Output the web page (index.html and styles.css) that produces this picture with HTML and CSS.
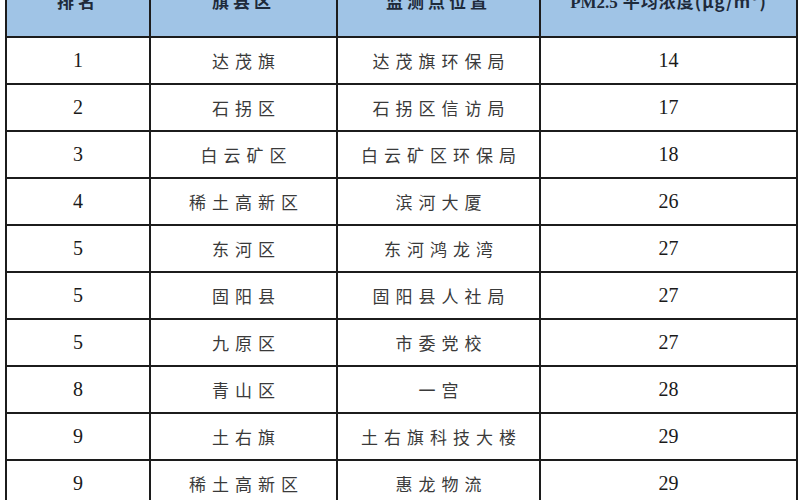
FILE: index.html
```html
<!DOCTYPE html>
<html lang="zh">
<head>
<meta charset="utf-8">
<link rel="stylesheet" href="styles.css">
</head>
<body>
<table class="rank">
  <colgroup>
    <col class="c1"><col class="c2"><col class="c3"><col class="c4">
  </colgroup>
  <thead>
    <tr><th>排名</th><th>旗县区</th><th>监测点位置</th><th class="wide"><span class="lat">PM2.5</span> 平均浓度(μg/m³)</th></tr>
  </thead>
  <tbody>
    <tr><td class="num">1</td><td>达茂旗</td><td>达茂旗环保局</td><td class="num">14</td></tr>
    <tr><td class="num">2</td><td>石拐区</td><td>石拐区信访局</td><td class="num">17</td></tr>
    <tr><td class="num">3</td><td>白云矿区</td><td>白云矿区环保局</td><td class="num">18</td></tr>
    <tr><td class="num">4</td><td>稀土高新区</td><td>滨河大厦</td><td class="num">26</td></tr>
    <tr><td class="num">5</td><td>东河区</td><td>东河鸿龙湾</td><td class="num">27</td></tr>
    <tr><td class="num">5</td><td>固阳县</td><td>固阳县人社局</td><td class="num">27</td></tr>
    <tr><td class="num">5</td><td>九原区</td><td>市委党校</td><td class="num">27</td></tr>
    <tr><td class="num">8</td><td>青山区</td><td>一宫</td><td class="num">28</td></tr>
    <tr><td class="num">9</td><td>土右旗</td><td>土右旗科技大楼</td><td class="num">29</td></tr>
    <tr><td class="num">9</td><td>稀土高新区</td><td>惠龙物流</td><td class="num">29</td></tr>
  </tbody>
</table>
</body>
</html>
```

FILE: styles.css
```css
html, body {
  margin: 0;
  padding: 0;
  background: #ffffff;
}
body {
  padding: 0 4px 0 5px;
  overflow: hidden;
  height: 500px;
}
.rank {
  width: 791px;
  margin-top: -37px;
  border-collapse: collapse;
  table-layout: fixed;
  font-family: "Noto Sans CJK SC", "Noto Sans", sans-serif;
}
.c1 { width: 144px; }
.c2 { width: 187px; }
.c3 { width: 203px; }
.c4 { width: 257px; }
.rank th,
.rank td {
  border: 2px solid #1c1c1c;
  text-align: center;
  vertical-align: middle;
  padding: 0;
}
.rank th {
  height: 71px;
  background: #a0c4e6;
  color: #1e2a3a;
  font-size: 17px;
  font-weight: bold;
  letter-spacing: 4px;
  white-space: nowrap;
}
.rank th.wide {
  letter-spacing: 1px;
}
.rank th .lat {
  font-family: "Liberation Serif", serif;
  letter-spacing: 0;
}
.rank td {
  height: 45px;
  color: #3a3a3a;
  font-size: 17px;
  letter-spacing: 6px;
  text-indent: 6px;
}
.rank td.num {
  font-family: "Liberation Serif", serif;
  font-size: 20px;
  color: #1a1a1a;
  letter-spacing: 0;
  text-indent: 0;
}
```
